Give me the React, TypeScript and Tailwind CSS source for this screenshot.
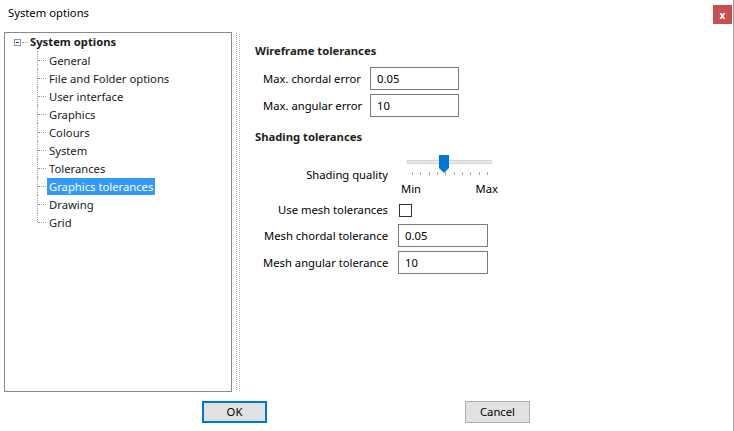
import React from "react";

const treeItems = [
  "General",
  "File and Folder options",
  "User interface",
  "Graphics",
  "Colours",
  "System",
  "Tolerances",
  "Graphics tolerances",
  "Drawing",
  "Grid",
];

function TreeChild({ label, selected, last }: { label: string; selected?: boolean; last?: boolean }) {
  return (
    <div className="flex h-[18px] items-center">
      {/* connector */}
      <div className="relative ml-[32px] h-full w-[10px]">
        <div
          className={
            "absolute left-0 top-0 border-l border-dotted border-[#a0a0a0] " +
            (last ? "h-[9px]" : "h-full")
          }
        />
        <div className="absolute left-[1px] top-[9px] w-[8px] border-t border-dotted border-[#a0a0a0]" />
      </div>
      <span
        className={
          "h-[17px] px-[2px] leading-[17px] " +
          (selected ? "bg-[#3399ff] text-white" : "text-[#1a1a1a]")
        }
      >
        {label}
      </span>
    </div>
  );
}

function TextBox({ value, w }: { value: string; w: string }) {
  return (
    <div className={"flex h-[23px] items-center border border-[#7a7a7a] bg-white pl-[6px] text-black " + w}>
      {value}
    </div>
  );
}

function Slider() {
  const ticks = Array.from({ length: 10 });
  return (
    <div className="relative w-[100px]">
      <div className="h-[20px] pt-[8px]">
        <div className="ml-[9px] h-[4px] w-[85px] border border-[#d6d6d6] bg-[#e7e7e7]" />
      </div>
      <div className="ml-[14px] flex h-[4px] w-[76px] justify-between">
        {ticks.map((_, i) => (
          <div key={i} className="h-[3px] w-px bg-[#a8a8a8]" />
        ))}
      </div>
      <div className="mt-[5px] flex justify-between pl-[3px] text-black">
        <span>Min</span>
        <span>Max</span>
      </div>
      <svg className="absolute left-[41px] top-[3px]" width="11" height="19" viewBox="0 0 11 19">
        <polygon points="0,0 10,0 10,13 5,18 0,13" fill="#0078d7" />
      </svg>
    </div>
  );
}

export default function App() {
  return (
    <div className="relative h-[431px] w-[734px] overflow-hidden border-r border-[#a6a6a6] bg-white font-['Noto_Sans',sans-serif] text-[11.25px] leading-[16px] text-black">
      {/* odd bits of the window behind */}
      <div className="absolute right-[-1px] top-[318px] h-[15px] w-px bg-[#3c9a3c]" />
      <div className="absolute right-[-1px] top-[366px] h-[16px] w-px bg-[#a83232]" />

      {/* Title bar */}
      <div className="flex h-[32px] items-start justify-between">
        <div className="pl-[8px] pt-[5px]">System options</div>
        <button className="mr-[1px] mt-[5px] flex h-[19px] w-[19px] items-center justify-center bg-[#c75050] text-[10px] font-bold leading-none text-white">
          x
        </button>
      </div>

      {/* Body */}
      <div className="flex h-[360px]">
        {/* Tree */}
        <div className="ml-[4px] h-full w-[228px] border border-[#828790]">
          <div className="flex h-[18px] items-center">
            <div className="ml-[9px] flex h-[7px] w-[7px] items-center justify-center border border-[#919191]">
              <div className="h-px w-[3px] bg-[#2b4c7e]" />
            </div>
            <div className="ml-[1px] w-[6px] border-t border-dotted border-[#a0a0a0]" />
            <span className="ml-[2px] whitespace-nowrap font-bold text-[#1a1a1a]">System options</span>
          </div>
          {treeItems.map((t, i) => (
            <TreeChild
              key={t}
              label={t}
              selected={t === "Graphics tolerances"}
              last={i === treeItems.length - 1}
            />
          ))}
        </div>

        {/* Splitter grip */}
        <div className="ml-[4px] flex h-[358px] w-[4px] pt-[1px]">
          <div className="h-full border-l border-dotted border-[#b4b4b4]" />
          <div className="ml-[2px] mt-[1px] h-full border-l border-dotted border-[#b4b4b4]" />
        </div>

        {/* Options panel */}
        <div className="flex-1 whitespace-nowrap pl-[15px] pt-[11px]">
          <div className="font-bold text-[#1e1e1e]">Wireframe tolerances</div>
          <div className="mt-[8px] grid grid-cols-[107px_89px] gap-y-[4px] pl-[8px]">
            <div className="flex h-[23px] items-center">Max. chordal error</div>
            <TextBox value="0.05" w="w-[89px]" />
            <div className="flex h-[23px] items-center">Max. angular error</div>
            <TextBox value="10" w="w-[89px]" />
          </div>

          <div className="mt-[12px] font-bold text-[#1e1e1e]">Shading tolerances</div>

          <div className="mt-[7px] grid grid-cols-[125px_100px] gap-x-[10px] pl-[8px]">
            <div className="mt-[15px] text-right">Shading quality</div>
            <Slider />
          </div>

          <div className="mt-[5px] grid grid-cols-[125px_90px] items-center gap-x-[10px] gap-y-[4px] pl-[8px]">
            <div className="h-[16px] text-right">Use mesh tolerances</div>
            <div className="ml-[1px] h-[13px] w-[13px] border border-[#333333] bg-white" />
            <div className="mt-[2px] text-right">Mesh chordal tolerance</div>
            <div className="mt-[2px]">
              <TextBox value="0.05" w="w-[90px]" />
            </div>
            <div className="text-right">Mesh angular tolerance</div>
            <TextBox value="10" w="w-[90px]" />
          </div>
        </div>
      </div>

      {/* Buttons */}
      <div className="mt-[9px] flex">
        <button className="ml-[202px] h-[22px] w-[65px] border-2 border-[#0078d7] bg-[#e1e1e1] text-black">
          OK
        </button>
        <button className="ml-[198px] h-[22px] w-[65px] border border-[#adadad] bg-[#e1e1e1] text-black">
          Cancel
        </button>
      </div>
    </div>
  );
}
